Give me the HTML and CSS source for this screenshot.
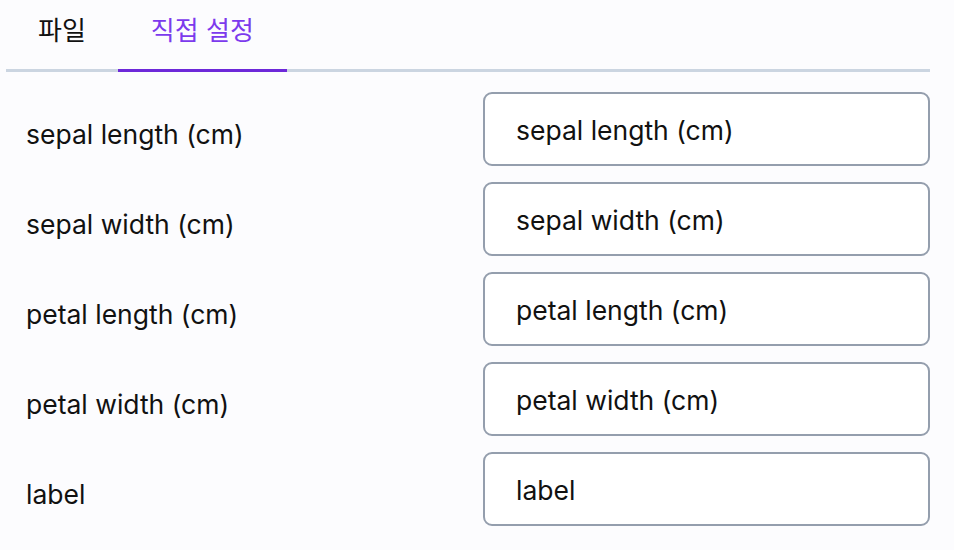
FILE: index.html
```html
<!DOCTYPE html>
<html lang="ko">
<head>
<meta charset="utf-8">
<link rel="stylesheet" href="styles.css">
</head>
<body>
<div class="panel">
  <div class="tabs">
    <div class="tab">파일</div>
    <div class="tab active">직접 설정</div>
  </div>
  <div class="rows">
    <div class="row"><div class="label">sepal length (cm)</div><div class="field">sepal length (cm)</div></div>
    <div class="row"><div class="label">sepal width (cm)</div><div class="field">sepal width (cm)</div></div>
    <div class="row"><div class="label">petal length (cm)</div><div class="field">petal length (cm)</div></div>
    <div class="row"><div class="label">petal width (cm)</div><div class="field">petal width (cm)</div></div>
    <div class="row"><div class="label">label</div><div class="field">label</div></div>
  </div>
</div>
</body>
</html>
```
FILE: styles.css
```css
html, body {
  margin: 0;
  padding: 0;
  background: #fcfcfe;
}
body {
  font-family: Inter, "Noto Sans CJK KR", sans-serif;
  color: #111;
}
.panel {
  width: 924px;
  margin-left: 6px;
}
.tabs {
  display: flex;
  border-bottom: 3px solid #cbd5e1;
}
.tab {
  font-size: 26px;
  line-height: 36px;
  padding: 13px 32px 20px;
  margin-bottom: -3px;
  border-bottom: 3px solid transparent;
  color: #111;
}
.tab.active {
  color: #7c3aed;
  border-bottom-color: #6d28d9;
  padding-left: 33px;
  padding-right: 33px;
}
.rows {
  display: flex;
  flex-direction: column;
  gap: 16px;
  padding-top: 20px;
}
.row {
  display: grid;
  grid-template-columns: 477px 1fr;
  align-items: center;
}
.label {
  font-size: 26.5px;
  padding-left: 20px;
  padding-top: 10px;
}
.field {
  box-sizing: border-box;
  height: 74px;
  border: 2px solid #949ead;
  border-radius: 9px;
  background: #fff;
  font-size: 26.5px;
  padding: 2px 31px 0;
  display: flex;
  align-items: center;
}
```
